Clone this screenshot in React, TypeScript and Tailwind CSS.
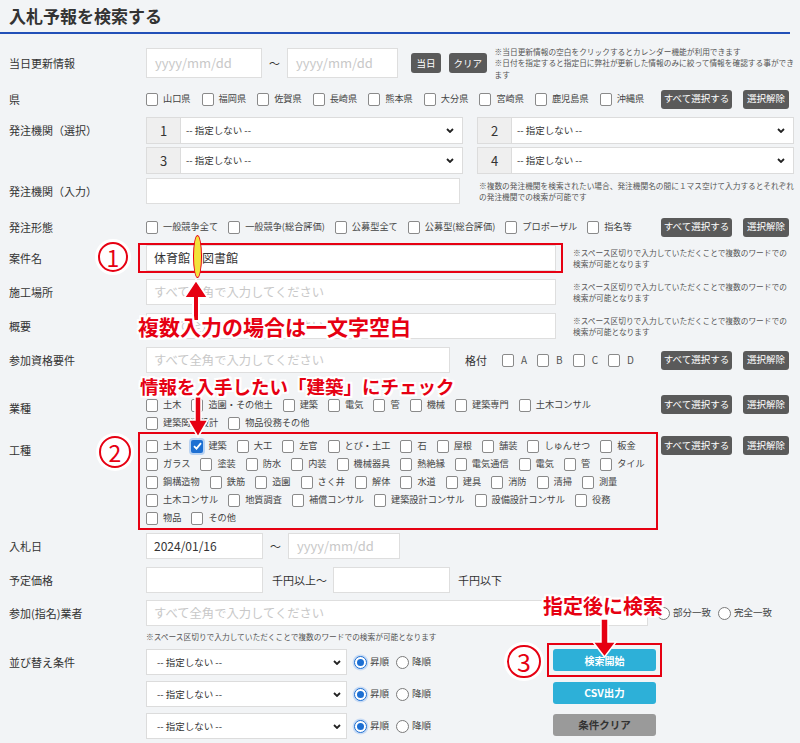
import React from "react";

const RED = "#e60012";

type CbProps = { label: string; checked?: boolean };

function Cb({ label, checked }: CbProps) {
  return (
    <span className="flex items-center gap-[5px] whitespace-nowrap text-[9.2px] leading-none text-[#444]">
      {checked ? (
        <span className="flex h-[13px] w-[12px] items-center justify-center rounded-[2px] bg-[#1d6fd2] shadow-[0_0_0_2px_#b8d2f2]">
          <svg width="9" height="8" viewBox="0 0 9 8">
            <path d="M1 4.2 L3.5 6.6 L8 1.2" fill="none" stroke="#fff" strokeWidth="1.8" />
          </svg>
        </span>
      ) : (
        <span className="h-[13px] w-[12px] rounded-[2px] border border-[#8a8a8a] bg-white" />
      )}
      {label}
    </span>
  );
}

function Radio({ label, checked }: { label: string; checked?: boolean }) {
  return (
    <span className="flex items-center gap-[3px] whitespace-nowrap text-[9.5px] leading-none text-[#444]">
      {checked ? (
        <span className="flex h-[13px] w-[13px] items-center justify-center rounded-full border-[1.5px] border-[#1d6fd2] bg-white shadow-[0_0_0_1.5px_#c9dcf5]">
          <span className="h-[7px] w-[7px] rounded-full bg-[#1d6fd2]" />
        </span>
      ) : (
        <span className="h-[13px] w-[13px] rounded-full border border-[#7a7a7a] bg-white" />
      )}
      {label}
    </span>
  );
}

function DarkBtn({ children, w }: { children: React.ReactNode; w: string }) {
  return (
    <span
      className={`flex h-[19px] items-center justify-center rounded-[3px] bg-[#5a5a5a] text-[9.5px] leading-none text-white ${w}`}
    >
      {children}
    </span>
  );
}

function SelAll() {
  return (
    <div className="ml-auto mr-[5px] flex gap-[11px]">
      <DarkBtn w="w-[71px]">すべて選択する</DarkBtn>
      <DarkBtn w="w-[46px]">選択解除</DarkBtn>
    </div>
  );
}

function Chevron() {
  return (
    <svg width="8" height="5" viewBox="0 0 8 5">
      <path d="M1 1 L4 4 L7 1" fill="none" stroke="#222" strokeWidth="1.8" />
    </svg>
  );
}

function NumSelect({ n }: { n: string }) {
  return (
    <div className="flex h-[27px] w-[317px] border border-[#dcdcdc] bg-white">
      <div className="flex w-[34px] items-center justify-center border-r border-[#dcdcdc] bg-[#efefef] text-[13px] text-[#333]">
        {n}
      </div>
      <div className="flex flex-1 items-center pl-[5px] pr-[8px] text-[9.5px] text-[#333]">
        <span className="flex-1">-- 指定しない --</span>
        <Chevron />
      </div>
    </div>
  );
}

function Input({ w, text, ph }: { w: string; text?: string; ph?: string }) {
  return (
    <div
      className={`flex h-full items-center border border-[#dedede] bg-white px-[7px] ${w} ${
        text ? "text-[12px] text-[#333]" : "text-[12.3px] text-[#c8c8c8]"
      }`}
    >
      {text ?? ph}
    </div>
  );
}

function DateInput({ w }: { w: string }) {
  return (
    <div className={`flex h-full items-center border border-[#dedede] bg-white pl-[8px] text-[13px] text-[#c8c8c8] ${w}`}>
      yyyy/mm/dd
    </div>
  );
}

function Note({ lines, className }: { lines: string[]; className?: string }) {
  return (
    <div className={`text-[7.7px] leading-[11.5px] whitespace-nowrap text-[#555] ${className ?? ""}`}>
      {lines.map((l) => (
        <div key={l}>{l}</div>
      ))}
    </div>
  );
}

const SPACE_NOTE = ["※スペース区切りで入力していただくことで複数のワードでの", "検索が可能となります"];

function Row({
  label,
  className,
  labelClass,
  children,
}: {
  label: string;
  className?: string;
  labelClass?: string;
  children: React.ReactNode;
}) {
  return (
    <div className={`flex ${className ?? ""}`}>
      <div className={`flex w-[137px] shrink-0 items-center text-[11px] text-[#333] ${labelClass ?? ""}`}>{label}</div>
      <div className="flex min-w-0 flex-1 items-center">{children}</div>
    </div>
  );
}

const KOSHU = [
  ["土木", "建築", "大工", "左官", "とび・土工", "石", "屋根", "舗装", "しゅんせつ", "板金"],
  ["ガラス", "塗装", "防水", "内装", "機械器具", "熱絶縁", "電気通信", "電気", "管", "タイル"],
  ["鋼構造物", "鉄筋", "造園", "さく井", "解体", "水道", "建具", "消防", "清掃", "測量"],
  ["土木コンサル", "地質調査", "補償コンサル", "建築設計コンサル", "設備設計コンサル", "役務"],
  ["物品", "その他"],
];

const outline =
  "[text-shadow:2px_0_0_#fff,-2px_0_0_#fff,0_2px_0_#fff,0_-2px_0_#fff,2px_2px_0_#fff,-2px_-2px_0_#fff,2px_-2px_0_#fff,-2px_2px_0_#fff]";

function Circled({ n, className }: { n: string; className: string }) {
  return (
    <div
      className={`absolute flex items-center justify-center rounded-full border-[2.5px] border-[#e60012] bg-white text-[23px] leading-none text-[#e60012] shadow-[0_0_0_3px_#fff] ${className}`}
    >
      {n}
    </div>
  );
}

export default function App() {
  return (
    <div className="relative h-[743px] w-[800px] overflow-hidden bg-[#f2f4f6] font-['Noto_Sans_CJK_JP',sans-serif] text-[#333]">
      {/* Title */}
      <div className="flex h-[34px] w-[790px] items-center border-b-2 border-[#2250b8] pl-[9px] text-[17px] font-bold text-[#333]">
        入札予報を検索する
      </div>

      <div className="pl-[9px] pr-[6px]">
        <Row label="当日更新情報" className="mt-[14px] h-[30px]">
          <DateInput w="w-[117px]" />
          <span className="w-[25px] text-center text-[11px]">〜</span>
          <DateInput w="w-[112px]" />
          <span className="ml-[13px] flex h-[20px] w-[30px] items-center justify-center rounded-[3px] bg-[#5a5a5a] text-[9.5px] text-white">
            当日
          </span>
          <span className="ml-[8px] flex h-[20px] w-[38px] items-center justify-center rounded-[3px] bg-[#5a5a5a] text-[9.5px] text-white">
            クリア
          </span>
          <Note
            className="ml-[8px]"
            lines={[
              "※当日更新情報の空白をクリックするとカレンダー機能が利用できます",
              "※日付を指定すると指定日に弊社が更新した情報のみに絞って情報を確認する事ができ",
              "ます",
            ]}
          />
        </Row>

        <Row label="県" className="mt-[11px] h-[20px]">
          <div className="flex gap-x-[11px]">
            {["山口県", "福岡県", "佐賀県", "長崎県", "熊本県", "大分県", "宮崎県", "鹿児島県", "沖縄県"].map((p) => (
              <Cb key={p} label={p} />
            ))}
          </div>
          <SelAll />
        </Row>

        <Row label="発注機関（選択）" className="mt-[8px]" labelClass="h-[27px] self-start">
          <div className="flex flex-col gap-[3px]">
            <div className="flex gap-[14px]">
              <NumSelect n="1" />
              <NumSelect n="2" />
            </div>
            <div className="flex gap-[14px]">
              <NumSelect n="3" />
              <NumSelect n="4" />
            </div>
          </div>
        </Row>

        <Row label="発注機関（入力）" className="mt-[4px] h-[26px]">
          <Input w="w-[317px]" />
          <Note
            className="ml-[19px]"
            lines={[
              "※複数の発注機関を検索されたい場合、発注機関名の間に１マス空けて入力するとそれぞれ",
              "の発注機関での検索が可能です",
            ]}
          />
        </Row>

        <Row label="発注形態" className="mt-[13px] h-[20px]">
          <div className="flex gap-x-[10px]">
            {["一般競争全て", "一般競争(総合評価)", "公募型全て", "公募型(総合評価)", "プロポーザル", "指名等"].map((p) => (
              <Cb key={p} label={p} />
            ))}
          </div>
          <SelAll />
        </Row>

        <Row label="案件名" className="mt-[8px] h-[26px]">
          <Input w="w-[410px]" text="体育館　図書館" />
          <Note className="ml-[17px]" lines={SPACE_NOTE} />
        </Row>

        <Row label="施工場所" className="mt-[8px] h-[26px]">
          <Input w="w-[410px]" ph="すべて全角で入力してください" />
          <Note className="ml-[17px]" lines={SPACE_NOTE} />
        </Row>

        <Row label="概要" className="mt-[8px] h-[26px]">
          <Input w="w-[410px]" ph="すべて全角で入力してください" />
          <Note className="ml-[17px]" lines={SPACE_NOTE} />
        </Row>

        <Row label="参加資格要件" className="mt-[8px] h-[26px]">
          <Input w="w-[304px]" ph="すべて全角で入力してください" />
          <span className="ml-[15px] text-[11px]">格付</span>
          <div className="ml-[15px] flex gap-x-[10px]">
            {["A", "B", "C", "D"].map((p) => (
              <span key={p} className="flex items-center gap-[7px] text-[10px] leading-none text-[#555]">
                <span className="h-[13px] w-[12px] rounded-[2px] border border-[#8a8a8a] bg-white" />
                {p}
              </span>
            ))}
          </div>
          <SelAll />
        </Row>

        <div className="mt-[23px] flex">
          <div className="flex h-[24px] w-[137px] shrink-0 items-center text-[11px]">業種</div>
          <div className="flex flex-1 items-start">
            <div className="flex flex-col">
              <div className="flex h-[18px] items-center gap-x-[10px]">
                {["土木", "造園・その他土", "建築", "電気", "管", "機械", "建築専門", "土木コンサル"].map((p) => (
                  <Cb key={p} label={p} />
                ))}
              </div>
              <div className="flex h-[18px] items-center gap-x-[10px]">
                <Cb label="建築関連設計" />
                <Cb label="物品役務その他" />
              </div>
            </div>
            <div className="ml-auto -mt-[1px] flex">
              <SelAll />
            </div>
          </div>
        </div>

        <div className="mt-[5px] flex">
          <div className="flex h-[26px] w-[137px] shrink-0 items-center text-[11px]">工種</div>
          <div className="flex flex-1 items-start">
            <div className="flex flex-col">
              {KOSHU.map((row, i) => (
                <div key={i} className="flex h-[18px] items-center gap-x-[10px]">
                  {row.map((p) => (
                    <Cb key={p} label={p} checked={i === 0 && p === "建築"} />
                  ))}
                </div>
              ))}
            </div>
            <div className="ml-auto -mt-[1px] flex">
              <SelAll />
            </div>
          </div>
        </div>

        <Row label="入札日" className="mt-[6px] h-[26px]">
          <Input w="w-[117px]" text="2024/01/16" />
          <span className="w-[25px] text-center text-[11px]">〜</span>
          <DateInput w="w-[112px]" />
        </Row>

        <Row label="予定価格" className="mt-[8px] h-[26px]">
          <Input w="w-[117px]" />
          <span className="ml-[9px] text-[11px]">千円以上〜</span>
          <div className="ml-[6px] h-full">
            <Input w="w-[117px]" />
          </div>
          <span className="ml-[8px] text-[11px]">千円以下</span>
        </Row>

        <Row label="参加(指名)業者" className="mt-[7px] h-[26px]">
          <Input w="w-[502px]" ph="すべて全角で入力してください" />
          <div className="ml-[9px] flex gap-[7px]">
            <Radio label="部分一致" />
            <Radio label="完全一致" />
          </div>
        </Row>

        <div className="mt-[5px] flex h-[12px] items-center pl-[137px]">
          <Note lines={["※スペース区切りで入力していただくことで複数のワードでの検索が可能となります"]} />
        </div>

        <div className="mt-[6px] flex">
          <div className="flex h-[26px] w-[137px] shrink-0 items-center text-[11px]">並び替え条件</div>
          <div className="flex w-[300px] flex-col gap-[6px]">
            {[0, 1, 2].map((i) => (
              <div key={i} className="flex h-[26px] items-center">
                <div className="flex h-full w-[201px] items-center border border-[#dcdcdc] bg-white pl-[10px] pr-[5px] text-[9.5px]">
                  <span className="flex-1">-- 指定しない --</span>
                  <Chevron />
                </div>
                <div className="ml-[7px] flex gap-[7px]">
                  <Radio label="昇順" checked />
                  <Radio label="降順" />
                </div>
              </div>
            ))}
          </div>
          <div className="ml-[107px] flex flex-col">
            <span className="flex h-[22px] w-[103px] items-center justify-center rounded-[3px] bg-[#2db0d8] text-[10px] font-bold text-white">
              検索開始
            </span>
            <span className="mt-[11px] flex h-[22px] w-[103px] items-center justify-center rounded-[3px] bg-[#2db0d8] text-[10.5px] font-bold text-white">
              CSV出力
            </span>
            <span className="mt-[10px] flex h-[22px] w-[103px] items-center justify-center rounded-[3px] bg-[#9a9a9a] text-[10.5px] font-bold text-[#333]">
              条件クリア
            </span>
          </div>
        </div>
      </div>

      {/* Annotations */}
      <div className="absolute left-[138px] top-[243px] h-[30px] w-[425px] border-2 border-[#e60012]" />
      <div className="absolute left-[138px] top-[432px] h-[98px] w-[520px] border-2 border-[#e60012]" />
      <div className="absolute left-[547px] top-[643px] h-[34px] w-[115px] border-2 border-[#e60012]" />

      <div className="absolute left-[193px] top-[235px] h-[43px] w-[9px] rounded-[50%] border border-[#e60012] bg-[#f3e23a]" />

      <Circled n="1" className="left-[98px] top-[242px] h-[30px] w-[30px]" />
      <Circled n="2" className="left-[99px] top-[436px] h-[32px] w-[32px]" />
      <Circled n="3" className="left-[507px] top-[645px] h-[33px] w-[34px] text-[25px]" />

      <svg className="absolute left-[182px] top-[278px]" width="28" height="44" viewBox="0 0 28 44">
        <path d="M14 2 L26 20 L17 20 L17 43 L11 43 L11 20 L2 20 Z" fill={RED} stroke="#fff" strokeWidth="2" />
      </svg>
      <svg className="absolute left-[185px] top-[396px]" width="26" height="43" viewBox="0 0 26 43">
        <path d="M10 0 L10 24 L3 24 L13 41 L23 24 L16 24 L16 0 Z" fill={RED} stroke="#fff" strokeWidth="1.5" />
      </svg>
      <svg className="absolute left-[590px] top-[619px]" width="29" height="40" viewBox="0 0 29 40">
        <path d="M11 0 L11 23 L3 23 L14.5 38 L26 23 L18 23 L18 0 Z" fill={RED} stroke="#fff" strokeWidth="1.5" />
      </svg>

      <div className={`absolute left-[138px] top-[316px] whitespace-nowrap text-[21px] font-bold leading-none text-[#e60012] ${outline}`}>
        複数入力の場合は一文字空白
      </div>
      <div className={`absolute left-[140px] top-[377px] whitespace-nowrap text-[18.5px] font-bold leading-none text-[#e60012] ${outline}`}>
        情報を入手したい「建築」にチェック
      </div>
      <div className={`absolute left-[543px] top-[596px] whitespace-nowrap text-[20px] font-bold leading-none text-[#e60012] ${outline}`}>
        指定後に検索
      </div>
    </div>
  );
}
